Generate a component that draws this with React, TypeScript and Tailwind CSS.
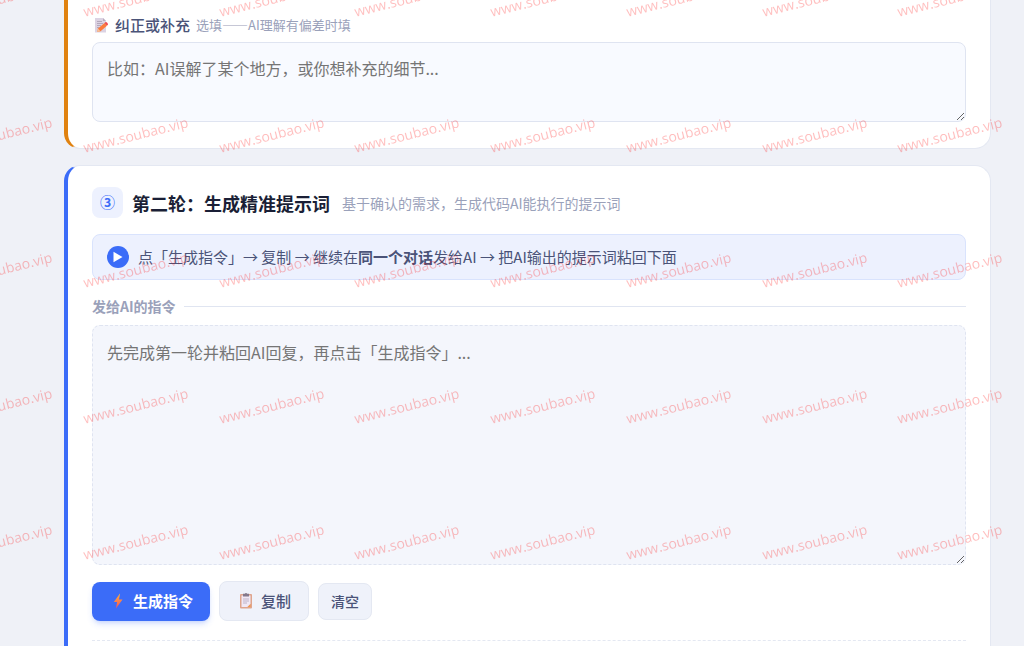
import { useState } from "react";

const marks = Array.from({ length: 40 }, (_, i) => i);

function MemoIcon() {
    return (
        <svg width="16" height="16" viewBox="0 0 16 16" aria-hidden="true">
            <path d="M3 1h8l3 3v11.500H3z" fill="#dcd3e3" />
            <path d="M11 1v3h3z" fill="#b9aebf" />
            <path d="M5 4.500h5M5 6.500h6M5 8.500h4M5 10.500h2" stroke="#a99db3" strokeWidth=".8" />
            <path d="M6 11.500L12.500 6l2.500 2.800-6.500 5.400-3.200.8z" fill="#fb7b3c" />
            <path d="M12.500 6l1-.8c.9-.5 2.700 1.300 2.400 2.300l-.9 1.300z" fill="#f0474c" />
            <path d="M6 11.500l2.500 2.700-3.200.8z" fill="#f6c29a" />
        </svg>
    )
}

function BoltIcon() {
    return (
        <svg width="16" height="16" viewBox="0 0 16 16" aria-hidden="true">
            <defs>
                <linearGradient id="bolt" x1="0" y1="0" x2="0" y2="1">
                    <stop offset="0" stopColor="#fdb13c" />
                    <stop offset="1" stopColor="#f5505b" />
                </linearGradient>
            </defs>
            <path d="M9.800.8L3.800 8.900h3.300L6 15.500l6.500-9H8.900l1.200-5.700z" fill="url(#bolt)" />
        </svg>
    )
}

function ClipboardIcon() {
    return (
        <svg width="16" height="16" viewBox="0 0 16 16" aria-hidden="true">
            <rect x="2" y="1" width="12" height="14.500" rx="1" fill="#dfa58d" />
            <path d="M3.500 2.500h9v8.500l-3 3h-6z" fill="#f0e8f5" />
            <path d="M12.500 11v3h-3z" fill="#f09a50" />
            <path d="M5 .8h1.800a1.300 1.300 0 0 1 2.400 0H11v2.700H5z" fill="#84798c" />
            <path d="M5 6h6M5 8h6M5 10h4" stroke="#b9afc4" strokeWidth=".9" />
        </svg>
    )
}

function Watermark() {
    return (
        <div className="pointer-events-none fixed inset-0 overflow-hidden" aria-hidden="true">
            <div className="-mt-[69px] -ml-[68px] grid h-[679px] w-[1086px] grid-cols-8 grid-rows-5">
                {marks.map((m) => (
                    <div key={m} className="flex items-center justify-center">
                        <span className="-rotate-14 font-['Open_Sans'] text-sm whitespace-nowrap text-[#ff0000]/25">www.soubao.vip</span>
                    </div>
                ))}
            </div>
        </div>
    )
}

function App() {
    const [extra, setExtra] = useState<string>("");
    const [command, setCommand] = useState<string>("");

    const copyCommand = () => {
        navigator.clipboard?.writeText(command);
    }

    return (
        <div lang="zh-CN" className="min-h-screen overflow-hidden bg-[#eff1f7] pr-[33px] pl-16 font-['Noto_Sans_CJK_SC',sans-serif] text-[#4a5378]">
            <section className="rounded-b-2xl border border-t-0 border-l-4 border-[#e4e8f2] border-l-[#e08210] bg-white px-6 pt-3 pb-[26px]">
                <label htmlFor="extra" className="mb-1 flex h-[26px] items-center text-[15px] font-medium">
                    <MemoIcon />
                    <span className="mr-1.5 ml-[7px]">纠正或补充</span>
                    <span className="text-[13px] font-normal text-[#9aa1ba]">选填——AI理解有偏差时填</span>
                </label>
                <textarea
                    id="extra"
                    value={extra}
                    onChange={(e) => setExtra(e.target.value)}
                    placeholder="比如：AI误解了某个地方，或你想补充的细节..."
                    className="block h-20 w-full rounded-lg border border-[#dfe4f1] bg-[#f8faff] px-3.5 py-[11px] text-base leading-7 placeholder:text-[#757575]"
                />
            </section>

            <section className="mt-4 rounded-t-2xl border border-b-0 border-l-4 border-[#e4e8f2] border-l-[#3b6cf8] bg-white px-6 pt-[21px] pb-6">
                <div className="flex items-center">
                    <span className="flex size-[31px] items-center justify-center rounded-lg bg-[#edf1fe] text-[15px] font-bold text-[#3b6cf8]">③</span>
                    <h2 className="ml-[9px] text-lg font-bold text-[#1a1f36]">第二轮：生成精准提示词</h2>
                    <span className="ml-3 text-sm text-[#9aa1ba]">基于确认的需求，生成代码AI能执行的提示词</span>
                </div>

                <div className="mt-4 flex h-[46px] items-center rounded-lg border border-[#d9e3fd] bg-[#edf1fe] px-3.5 text-[15px]">
                    <svg width="22" height="22" viewBox="0 0 22 22" aria-hidden="true">
                        <circle cx="11" cy="11" r="11" fill="#3b6cf8" />
                        <path d="M6.500 5.800v10.500l9-5.250z" fill="#fff" />
                    </svg>
                    <p className="ml-[9px]">点「生成指令」→ 复制 → 继续在<strong>同一个对话</strong>发给AI → 把AI输出的提示词粘回下面</p>
                </div>

                <div className="mt-4 flex h-5 items-center gap-2 text-sm font-bold text-[#9aa1ba]">
                    <label htmlFor="command">发给AI的指令</label>
                    <div className="h-px grow bg-[#e0e5f1]" />
                </div>
                <textarea
                    id="command"
                    value={command}
                    onChange={(e) => setCommand(e.target.value)}
                    placeholder="先完成第一轮并粘回AI回复，再点击「生成指令」..."
                    className="mt-[9px] block h-60 w-full rounded-lg border border-dashed border-[#dfe4f1] bg-[#f4f6fc] px-3.5 py-3 text-base leading-7 placeholder:text-[#757575]"
                />

                <div className="mt-4 flex items-center gap-[9px]">
                    <button className="flex h-[39px] items-center gap-[7px] rounded-lg bg-[#3b6cf8] pr-[17px] pl-[18px] text-[15px] font-bold text-white shadow-md shadow-[#3b6cf8]/20">
                        <BoltIcon />
                        生成指令
                    </button>
                    <button onClick={copyCommand} className="flex h-10 items-center gap-[7px] rounded-lg border border-[#e4e8f2] bg-[#eff2fa] pr-[17px] pl-[18px] text-[15px] font-medium">
                        <ClipboardIcon />
                        复制
                    </button>
                    <button onClick={() => setCommand("")} className="h-[37px] rounded-lg border border-[#e4e8f2] bg-[#eff2fa] px-3 text-sm font-medium">清空</button>
                </div>
                <div className="mt-[19px] border-t border-dashed border-[#e4e8f2]" />
            </section>
            <Watermark />
        </div>
    );
}

export default App;
